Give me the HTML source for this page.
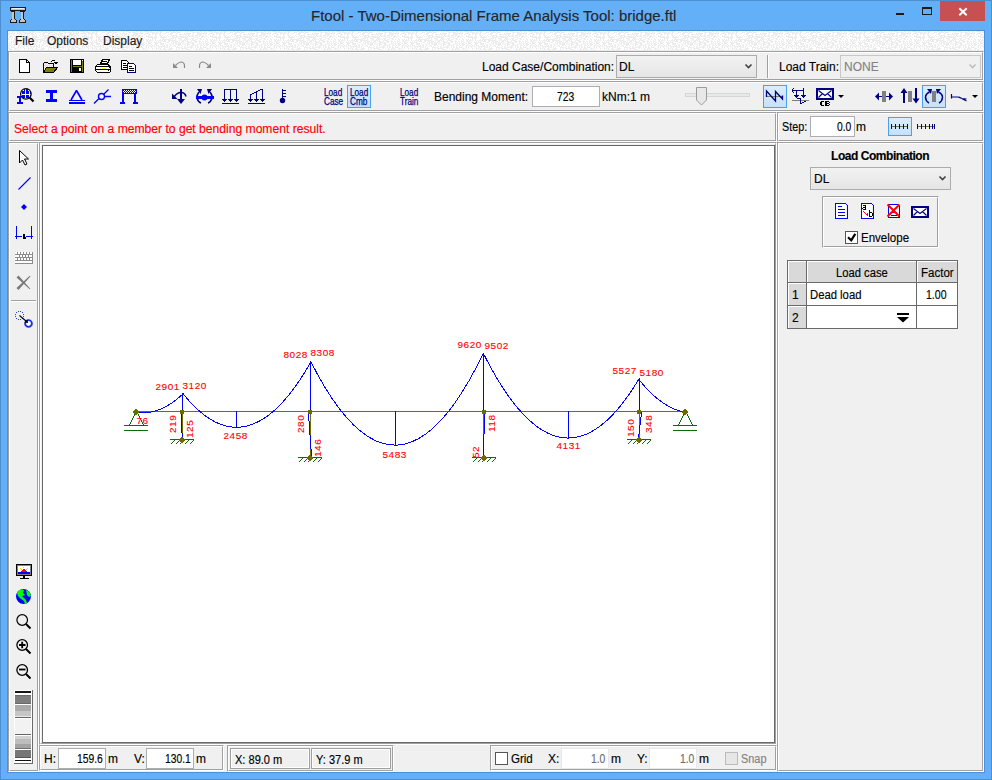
<!DOCTYPE html>
<html><head><meta charset="utf-8">
<style>
*{margin:0;padding:0;box-sizing:border-box}
html,body{width:992px;height:780px;overflow:hidden}
body{position:relative;background:#63b0f9;font-family:"Liberation Sans",sans-serif;font-size:12px;color:#000}
.a{position:absolute}
.t{position:absolute;white-space:nowrap;line-height:1;-webkit-text-stroke:0.15px currentColor}
.etch{position:absolute;border-top:1px solid #a0a0a0;border-left:1px solid #a0a0a0;border-right:1px solid #fff;border-bottom:1px solid #fff}
.etch>i{position:absolute;left:0;top:0;right:0;bottom:0;border-top:1px solid #fff;border-left:1px solid #fff;border-right:1px solid #a0a0a0;border-bottom:1px solid #a0a0a0}
.edit{position:absolute;background:#fff;border:1px solid #abadb3}
.combo{position:absolute;background:linear-gradient(#f2f2f2,#e5e5e5);border:1px solid #acacac}
.sel{position:absolute;background:linear-gradient(#dcedfc,#c5e1f9);border:1px solid #4a9ff0}
.small{position:absolute;white-space:nowrap;line-height:1;font-size:10.5px;color:#000080;transform-origin:0 0;transform:scaleX(0.78);-webkit-text-stroke:0.25px #000080}
svg.ov{position:absolute;left:0;top:0;width:992px;height:780px}
</style></head><body>
<!-- window frame edges -->
<div class="a" style="left:0;top:0;width:992px;height:1px;background:#4c8fd0"></div>
<div class="a" style="left:0;top:0;width:1px;height:780px;background:#4c8fd0"></div>
<div class="a" style="left:991px;top:0;width:1px;height:780px;background:#4c8fd0"></div>
<div class="a" style="left:0;top:779px;width:992px;height:1px;background:#4c8fd0"></div>

<!-- title -->
<div class="t" style="left:311px;top:8px;font-size:15px;color:#262626">Ftool - Two-Dimensional Frame Analysis Tool: bridge.ftl</div>

<!-- client -->
<div class="a" style="left:7px;top:30px;width:978px;height:743px;border:1px solid #4a91d8"></div>
<div class="a" style="left:8px;top:31px;width:976px;height:741px;background:#f0f0f0"></div>
<!-- menu bar -->
<div class="a" style="left:8px;top:31px;width:976px;height:20px;background:#f5f5f5"></div>
<svg class="a" style="left:8px;top:31px" width="976" height="20"><defs><pattern id="mt" width="64" height="19" patternUnits="userSpaceOnUse"><rect width="64" height="19" fill="#fff"/><path fill="#ececec" d="M0,0h2v1h-2zM3,0h1v1h-1zM5,0h2v1h-2zM8,0h5v1h-5zM14,0h2v1h-2zM19,0h1v1h-1zM21,0h1v1h-1zM23,0h4v1h-4zM28,0h1v1h-1zM31,0h1v1h-1zM33,0h3v1h-3zM37,0h2v1h-2zM40,0h2v1h-2zM44,0h1v1h-1zM49,0h1v1h-1zM51,0h2v1h-2zM54,0h3v1h-3zM61,0h1v1h-1zM1,1h1v1h-1zM4,1h1v1h-1zM6,1h1v1h-1zM11,1h2v1h-2zM14,1h5v1h-5zM20,1h3v1h-3zM24,1h2v1h-2zM30,1h3v1h-3zM35,1h5v1h-5zM41,1h4v1h-4zM51,1h1v1h-1zM56,1h3v1h-3zM60,1h4v1h-4zM0,2h7v1h-7zM9,2h5v1h-5zM16,2h6v1h-6zM23,2h2v1h-2zM27,2h1v1h-1zM29,2h1v1h-1zM34,2h3v1h-3zM40,2h2v1h-2zM48,2h1v1h-1zM50,2h5v1h-5zM57,2h1v1h-1zM61,2h3v1h-3zM0,3h2v1h-2zM5,3h1v1h-1zM8,3h1v1h-1zM13,3h2v1h-2zM16,3h1v1h-1zM19,3h2v1h-2zM23,3h3v1h-3zM28,3h1v1h-1zM32,3h1v1h-1zM34,3h2v1h-2zM40,3h1v1h-1zM43,3h4v1h-4zM48,3h3v1h-3zM52,3h2v1h-2zM56,3h1v1h-1zM61,3h3v1h-3zM0,4h1v1h-1zM2,4h2v1h-2zM6,4h1v1h-1zM10,4h1v1h-1zM12,4h2v1h-2zM19,4h1v1h-1zM24,4h1v1h-1zM26,4h1v1h-1zM31,4h1v1h-1zM35,4h6v1h-6zM44,4h1v1h-1zM47,4h1v1h-1zM50,4h1v1h-1zM52,4h2v1h-2zM56,4h2v1h-2zM59,4h3v1h-3zM63,4h1v1h-1zM1,5h3v1h-3zM6,5h1v1h-1zM10,5h3v1h-3zM14,5h3v1h-3zM19,5h2v1h-2zM24,5h2v1h-2zM27,5h2v1h-2zM32,5h1v1h-1zM34,5h1v1h-1zM36,5h2v1h-2zM40,5h2v1h-2zM43,5h7v1h-7zM51,5h1v1h-1zM53,5h5v1h-5zM60,5h2v1h-2zM63,5h1v1h-1zM1,6h2v1h-2zM4,6h1v1h-1zM8,6h1v1h-1zM12,6h5v1h-5zM18,6h3v1h-3zM24,6h7v1h-7zM34,6h1v1h-1zM36,6h5v1h-5zM42,6h1v1h-1zM44,6h8v1h-8zM58,6h2v1h-2zM61,6h1v1h-1zM0,7h1v1h-1zM6,7h1v1h-1zM16,7h5v1h-5zM26,7h2v1h-2zM33,7h1v1h-1zM35,7h3v1h-3zM39,7h1v1h-1zM42,7h3v1h-3zM49,7h3v1h-3zM53,7h1v1h-1zM55,7h3v1h-3zM61,7h1v1h-1zM63,7h1v1h-1zM0,8h2v1h-2zM3,8h1v1h-1zM6,8h2v1h-2zM10,8h3v1h-3zM14,8h1v1h-1zM16,8h1v1h-1zM19,8h1v1h-1zM24,8h1v1h-1zM26,8h9v1h-9zM36,8h1v1h-1zM39,8h1v1h-1zM43,8h3v1h-3zM48,8h5v1h-5zM54,8h1v1h-1zM56,8h2v1h-2zM59,8h2v1h-2zM5,9h1v1h-1zM7,9h1v1h-1zM10,9h2v1h-2zM13,9h4v1h-4zM19,9h1v1h-1zM21,9h1v1h-1zM23,9h4v1h-4zM28,9h2v1h-2zM32,9h8v1h-8zM43,9h2v1h-2zM46,9h4v1h-4zM51,9h1v1h-1zM55,9h5v1h-5zM63,9h1v1h-1zM0,10h1v1h-1zM3,10h1v1h-1zM5,10h2v1h-2zM11,10h3v1h-3zM20,10h1v1h-1zM22,10h1v1h-1zM24,10h1v1h-1zM27,10h3v1h-3zM32,10h2v1h-2zM36,10h2v1h-2zM39,10h3v1h-3zM45,10h3v1h-3zM50,10h3v1h-3zM54,10h2v1h-2zM58,10h4v1h-4zM63,10h1v1h-1zM3,11h1v1h-1zM5,11h1v1h-1zM7,11h2v1h-2zM10,11h1v1h-1zM12,11h4v1h-4zM18,11h3v1h-3zM22,11h4v1h-4zM31,11h2v1h-2zM35,11h1v1h-1zM37,11h7v1h-7zM45,11h1v1h-1zM47,11h2v1h-2zM51,11h4v1h-4zM56,11h2v1h-2zM59,11h2v1h-2zM63,11h1v1h-1zM0,12h2v1h-2zM3,12h1v1h-1zM6,12h2v1h-2zM10,12h1v1h-1zM12,12h3v1h-3zM19,12h3v1h-3zM24,12h4v1h-4zM29,12h1v1h-1zM35,12h3v1h-3zM39,12h2v1h-2zM42,12h3v1h-3zM46,12h1v1h-1zM50,12h4v1h-4zM55,12h3v1h-3zM63,12h1v1h-1zM1,13h1v1h-1zM3,13h1v1h-1zM5,13h4v1h-4zM11,13h2v1h-2zM15,13h1v1h-1zM19,13h2v1h-2zM24,13h4v1h-4zM31,13h1v1h-1zM33,13h2v1h-2zM37,13h1v1h-1zM40,13h5v1h-5zM47,13h3v1h-3zM51,13h3v1h-3zM56,13h3v1h-3zM61,13h2v1h-2zM0,14h3v1h-3zM4,14h1v1h-1zM6,14h2v1h-2zM10,14h2v1h-2zM13,14h2v1h-2zM16,14h1v1h-1zM18,14h1v1h-1zM20,14h3v1h-3zM26,14h1v1h-1zM28,14h1v1h-1zM30,14h2v1h-2zM34,14h2v1h-2zM38,14h2v1h-2zM42,14h2v1h-2zM45,14h1v1h-1zM49,14h1v1h-1zM51,14h2v1h-2zM55,14h3v1h-3zM59,14h3v1h-3zM0,15h1v1h-1zM3,15h1v1h-1zM5,15h1v1h-1zM9,15h2v1h-2zM12,15h1v1h-1zM14,15h3v1h-3zM18,15h2v1h-2zM22,15h8v1h-8zM31,15h1v1h-1zM33,15h1v1h-1zM37,15h1v1h-1zM39,15h1v1h-1zM41,15h1v1h-1zM46,15h1v1h-1zM48,15h1v1h-1zM51,15h1v1h-1zM54,15h2v1h-2zM57,15h1v1h-1zM59,15h1v1h-1zM61,15h1v1h-1zM0,16h2v1h-2zM3,16h4v1h-4zM10,16h1v1h-1zM12,16h1v1h-1zM15,16h1v1h-1zM20,16h1v1h-1zM23,16h1v1h-1zM25,16h1v1h-1zM28,16h1v1h-1zM30,16h2v1h-2zM33,16h1v1h-1zM35,16h1v1h-1zM40,16h4v1h-4zM45,16h1v1h-1zM48,16h2v1h-2zM51,16h6v1h-6zM59,16h1v1h-1zM61,16h2v1h-2zM0,17h3v1h-3zM6,17h3v1h-3zM11,17h1v1h-1zM13,17h1v1h-1zM16,17h1v1h-1zM18,17h1v1h-1zM20,17h3v1h-3zM24,17h1v1h-1zM27,17h2v1h-2zM33,17h4v1h-4zM40,17h1v1h-1zM43,17h1v1h-1zM45,17h6v1h-6zM55,17h1v1h-1zM57,17h1v1h-1zM60,17h1v1h-1zM63,17h1v1h-1zM1,18h3v1h-3zM7,18h1v1h-1zM9,18h2v1h-2zM16,18h1v1h-1zM20,18h1v1h-1zM23,18h2v1h-2zM26,18h1v1h-1zM28,18h3v1h-3zM32,18h4v1h-4zM40,18h1v1h-1zM42,18h1v1h-1zM46,18h1v1h-1zM50,18h4v1h-4zM59,18h3v1h-3zM63,18h1v1h-1z"/></pattern></defs><rect width="976" height="19" fill="url(#mt)"/><rect y="19" width="976" height="1" fill="#ececec"/></svg>
<div class="t" style="left:15px;top:35px;color:#1a1a1a">File</div>
<div class="t" style="left:47px;top:35px;color:#1a1a1a">Options</div>
<div class="t" style="left:103px;top:35px;color:#1a1a1a">Display</div>

<!-- bands / panels -->
<div class="etch" style="left:8px;top:51px;width:976px;height:30px"><i></i></div>
<div class="etch" style="left:8px;top:81px;width:976px;height:31px"><i></i></div>
<div class="etch" style="left:8px;top:112px;width:769px;height:30px"><i></i></div>
<div class="etch" style="left:777px;top:112px;width:207px;height:30px"><i></i></div>
<div class="etch" style="left:8px;top:142px;width:31px;height:630px"><i></i></div>
<div class="etch" style="left:39px;top:142px;width:738px;height:603px"><i></i></div>
<div class="etch" style="left:777px;top:142px;width:207px;height:630px"><i></i></div>
<div class="etch" style="left:39px;top:745px;width:185px;height:26px"><i></i></div>
<div class="etch" style="left:227px;top:745px;width:167px;height:27px"><i></i></div>
<div class="etch" style="left:490px;top:745px;width:287px;height:26px"><i></i></div>

<!-- canvas -->
<div class="a" style="left:42px;top:145px;width:733px;height:598px;background:#fff;border:1px solid #696969"></div>

<!-- band 1 controls -->
<div class="t" style="left:482px;top:61px">Load Case/Combination:</div>
<div class="combo" style="left:616px;top:55px;width:141px;height:23px"></div>
<div class="t" style="left:619px;top:61px">DL</div>
<div class="a" style="left:767px;top:55px;width:1px;height:23px;background:#a0a0a0"></div>
<div class="a" style="left:768px;top:55px;width:1px;height:23px;background:#fff"></div>
<div class="t" style="left:779px;top:61px">Load Train:</div>
<div class="a" style="left:840px;top:55px;width:141px;height:23px;background:#f0f0f0;border:1px solid #c8c8c8"></div>
<div class="t" style="left:844px;top:61px;color:#838383">NONE</div>

<!-- band 2 controls -->
<div class="small" style="left:324px;top:87px">Load</div>
<div class="small" style="left:324px;top:96px">Case</div>
<div class="sel" style="left:347px;top:85px;width:24px;height:23px"></div>
<div class="small" style="left:350px;top:87px">Load</div>
<div class="small" style="left:350px;top:96px">Cmb</div>
<div class="small" style="left:400px;top:87px">Load</div>
<div class="small" style="left:400px;top:96px">Train</div>
<div class="t" style="left:434px;top:91px">Bending Moment:</div>
<div class="edit" style="left:532px;top:86px;width:68px;height:21px;border-color:#abadb3"></div>
<div class="t" style="left:557px;top:91px;transform:scaleX(.86);transform-origin:0 0">723</div>
<div class="t" style="left:602px;top:91px">kNm:1 m</div>
<div class="sel" style="left:763px;top:85px;width:24px;height:23px"></div>
<div class="sel" style="left:922px;top:85px;width:24px;height:23px"></div>

<!-- message -->
<div class="t" style="left:14px;top:123px;color:#ff0000;transform:scaleX(1.009);transform-origin:0 0">Select a point on a member to get bending moment result.</div>

<!-- step panel -->
<div class="t" style="left:782px;top:121px;transform:scaleX(.9);transform-origin:0 0">Step:</div>
<div class="edit" style="left:810px;top:116px;width:45px;height:21px;border-color:#abadb3"></div>
<div class="t" style="left:837px;top:121px;transform:scaleX(.86);transform-origin:0 0">0.0</div>
<div class="t" style="left:856px;top:121px">m</div>
<div class="sel" style="left:888px;top:117px;width:24px;height:19px"></div>

<!-- right panel -->
<div class="t" style="left:831px;top:150px;font-weight:bold;letter-spacing:-0.45px">Load Combination</div>
<div class="combo" style="left:810px;top:167px;width:141px;height:23px"></div>
<div class="t" style="left:814px;top:173px">DL</div>
<div class="etch" style="left:822px;top:196px;width:117px;height:52px"><i></i></div>
<div class="a" style="left:845px;top:231px;width:13px;height:13px;background:#fff;border:1px solid #555"></div>
<div class="t" style="left:861px;top:232px;transform:scaleX(.96);transform-origin:0 0">Envelope</div>

<!-- table -->
<div class="a" style="left:787px;top:260px;width:171px;height:69px;background:#696969"></div>
<div class="a" style="left:788px;top:261px;width:18px;height:21px;background:#d9d9d9;border-top:1px solid #fff;border-left:1px solid #fff"></div>
<div class="a" style="left:807px;top:261px;width:109px;height:21px;background:#d9d9d9;border-top:1px solid #fff;border-left:1px solid #fff"></div>
<div class="a" style="left:917px;top:261px;width:40px;height:21px;background:#d9d9d9;border-top:1px solid #fff;border-left:1px solid #fff"></div>
<div class="a" style="left:788px;top:283px;width:18px;height:22px;background:#d9d9d9;border-top:1px solid #fff;border-left:1px solid #fff"></div>
<div class="a" style="left:807px;top:283px;width:109px;height:22px;background:#fff"></div>
<div class="a" style="left:917px;top:283px;width:40px;height:22px;background:#fff"></div>
<div class="a" style="left:788px;top:306px;width:18px;height:22px;background:#d9d9d9;border-top:1px solid #fff;border-left:1px solid #fff"></div>
<div class="a" style="left:807px;top:306px;width:109px;height:22px;background:#fff"></div>
<div class="a" style="left:917px;top:306px;width:40px;height:22px;background:#fff"></div>
<div class="t" style="left:836px;top:267px;transform:scaleX(.935);transform-origin:0 0">Load case</div>
<div class="t" style="left:921px;top:267px;transform:scaleX(.96);transform-origin:0 0">Factor</div>
<div class="t" style="left:792px;top:289px">1</div>
<div class="t" style="left:810px;top:289px;transform:scaleX(.94);transform-origin:0 0">Dead load</div>
<div class="t" style="left:926px;top:289px;transform:scaleX(.88);transform-origin:0 0">1.00</div>
<div class="t" style="left:792px;top:312px">2</div>

<!-- status bar -->
<div class="t" style="left:44px;top:753px">H:</div>
<div class="edit" style="left:58px;top:748px;width:48px;height:21px;border-color:#abadb3"></div>
<div class="t" style="left:77px;top:753px;transform:scaleX(.86);transform-origin:0 0">159.6</div>
<div class="t" style="left:108px;top:753px">m</div>
<div class="t" style="left:134px;top:753px">V:</div>
<div class="edit" style="left:146px;top:748px;width:48px;height:21px;border-color:#abadb3"></div>
<div class="t" style="left:165px;top:753px;transform:scaleX(.86);transform-origin:0 0">130.1</div>
<div class="t" style="left:196px;top:753px">m</div>
<div class="a" style="left:230px;top:748px;width:80px;height:21px;border:1px solid #a0a0a0"><i class="a" style="left:0;top:0;right:0;bottom:0;border:1px solid #fff"></i></div>
<div class="a" style="left:311px;top:748px;width:80px;height:21px;border:1px solid #a0a0a0"><i class="a" style="left:0;top:0;right:0;bottom:0;border:1px solid #fff"></i></div>
<div class="t" style="left:235px;top:754px;transform:scaleX(.92);transform-origin:0 0">X: 89.0 m</div>
<div class="t" style="left:316px;top:754px;transform:scaleX(.92);transform-origin:0 0">Y: 37.9 m</div>
<div class="a" style="left:495px;top:752px;width:13px;height:13px;background:#fff;border:1px solid #555"></div>
<div class="t" style="left:511px;top:753px;transform:scaleX(.96);transform-origin:0 0">Grid</div>
<div class="t" style="left:548px;top:753px">X:</div>
<div class="a" style="left:561px;top:748px;width:48px;height:21px;background:#fff;border:1px solid #e8e8e8"></div>
<div class="t" style="left:591px;top:753px;color:#6d6d6d;transform:scaleX(.86);transform-origin:0 0">1.0</div>
<div class="t" style="left:611px;top:753px">m</div>
<div class="t" style="left:637px;top:753px">Y:</div>
<div class="a" style="left:649px;top:748px;width:48px;height:21px;background:#fff;border:1px solid #e8e8e8"></div>
<div class="t" style="left:680px;top:753px;color:#6d6d6d;transform:scaleX(.86);transform-origin:0 0">1.0</div>
<div class="t" style="left:699px;top:753px">m</div>
<div class="a" style="left:725px;top:752px;width:13px;height:13px;background:#e6e6e6;border:1px solid #bcbcbc"></div>
<div class="t" style="left:741px;top:753px;color:#838383;transform:scaleX(.91);transform-origin:0 0">Snap</div>

<svg class="ov" viewBox="0 0 992 780" font-family="Liberation Sans">
<!-- title icon -->
<g shape-rendering="crispEdges">
<path fill="#1e1a16" d="M10,7h16v4h-16z M11,11h4v1h-4z M20,11h5v1h-5z M12,12h3v7h-3z M21,12h3v7h-3z M11,19h5v1h-5z M20,19h5v1h-5z M10,20h7v3h-7z M19,20h7v3h-7z"/>
<path fill="#c8c4c0" d="M11,8h14v2h-14z M12,12h2v7h-2z M21,12h2v7h-2z M12,19h3v1h-3z M21,19h3v1h-3z M11,20h5v2h-5z M20,20h5v2h-5z"/>
<path fill="#f0ece8" d="M12,8h12v1h-12z"/>
</g>
<!-- min/max/close -->
<rect x="896" y="13" width="8" height="2" fill="#1d1a17"/>
<rect x="922" y="7" width="10" height="8" fill="#1d1a17"/><rect x="923" y="9" width="8" height="5" fill="#63b0f9"/>
<rect x="940" y="1" width="45" height="20" fill="#c75050"/>
</g>
<path d="M959.3,8.3 L966.7,15.2 M966.7,8.3 L959.3,15.2" stroke="#fff" stroke-width="2"/>

<!-- band1 icons -->
<g shape-rendering="crispEdges">
<path d="M19.5,59.5 H26.5 L29.5,62.5 V72.5 H19.5 Z" fill="#fff" stroke="#000"/>
<path d="M26.5,59.5 V62.5 H29.5" fill="none" stroke="#000"/>
<!-- open -->
<defs><pattern id="chk" width="2" height="2" patternUnits="userSpaceOnUse"><rect width="2" height="2" fill="#ffff00"/><rect width="1" height="1" fill="#fff"/><rect x="1" y="1" width="1" height="1" fill="#fff"/></pattern></defs>
<path d="M43.5,72.5 V63.5 L44.5,62.5 H47.5 L48.5,63.5 H53.5 V67.5" fill="url(#chk)" stroke="#000"/>
<path d="M43.5,72.5 L46.5,67.5 H57.5 L53.5,72.5 Z" fill="#808000" stroke="#000"/>
<path d="M50.5,62.5 L52.5,60.5 H54.5 L55.5,61.5" fill="none" stroke="#000"/>
<path d="M54,62h4v1h-1v1h-2v-1h-1z" fill="#000"/>
<!-- save -->
<rect x="70" y="59" width="14" height="14" fill="#000"/>
<rect x="71" y="60" width="1" height="12" fill="#808000"/><rect x="82" y="61" width="1" height="11" fill="#808000"/>
<rect x="73" y="60" width="8" height="5" fill="#fff"/>
<rect x="73" y="66" width="9" height="1" fill="#808000"/>
<rect x="79" y="68" width="2" height="3" fill="#fff"/>
<rect x="82" y="60" width="1" height="1" fill="#fff"/>
<!-- printer -->
<path d="M100.5,63.5 L102.5,59.5 H109.5 L107.5,63.5 Z" fill="#fff" stroke="#000"/>
<rect x="102" y="61" width="5" height="1" fill="#000"/><rect x="101" y="62" width="1" height="1" fill="#000"/>
<path d="M97.5,64.5 H108.5 L110.5,66.5 V71.5 L109.5,72.5 H97.5 L95.5,70.5 V66.5 Z" fill="#fff" stroke="#000"/>
<rect x="96" y="66" width="14" height="1" fill="#000"/>
<rect x="96" y="69" width="14" height="1" fill="#000"/>
<rect x="102" y="68" width="4" height="1" fill="#ffff00"/>
<rect x="108" y="65" width="1" height="1" fill="#000"/><rect x="109" y="67" width="1" height="1" fill="#000"/><rect x="108" y="70" width="1" height="1" fill="#000"/>
<!-- copy -->
<path d="M121.5,60.5 H126.5 L128.5,62.5 V69.5 H121.5 Z" fill="#fff" stroke="#000"/>
<rect x="123" y="63" width="3" height="1" fill="#000"/><rect x="123" y="65" width="4" height="1" fill="#000"/><rect x="123" y="67" width="4" height="1" fill="#000"/>
<path d="M127.5,63.5 H133.5 L135.5,65.5 V72.5 H127.5 Z" fill="#fff" stroke="#000080"/>
<rect x="129" y="66" width="3" height="1" fill="#000"/><rect x="129" y="68" width="5" height="1" fill="#000"/><rect x="129" y="70" width="5" height="1" fill="#000"/>
</g>
<!-- undo/redo -->
<path d="M173,63 L178,68 L173,68 Z" fill="#8a8a8a"/>
<path d="M175.5,65.5 Q179,62 181.5,62 Q184.5,62.5 184.5,66 V68" fill="none" stroke="#8a8a8a" stroke-width="1.2"/>
<path d="M211,63 L206,68 L211,68 Z" fill="#8a8a8a"/>
<path d="M208.5,65.5 Q205,62 202.5,62 Q199.5,62.5 199.5,66 V68" fill="none" stroke="#8a8a8a" stroke-width="1.2"/>

<!-- band2 icons -->
<g shape-rendering="crispEdges">
<path fill="#0000ff" d="M17,96h4v2h-4z M19,98h2v4h-2z M17,102h6v2h-6z"/>
<circle cx="25.9" cy="93.9" r="5.3" fill="#fff"/>
<path fill="#0000ff" d="M22,91h3v3h-3z M26,91h3v3h-3z M22,95h3v3h-3z M26,95h3v3h-3z M24,89h1v2h-1z M26,89h2v2h-2z M30,91h1v3h-1z M30,95h1v2h-1z"/>
</g>
<circle cx="25.9" cy="93.9" r="5.3" fill="none" stroke="#000" stroke-width="1.2"/>
<path d="M29.8,97.8 L33.5,101.5" stroke="#000" stroke-width="2.2"/>
<g shape-rendering="crispEdges">
<rect x="46" y="90" width="11" height="3" fill="#0000ff"/><rect x="50" y="93" width="3" height="6" fill="#0000ff"/><rect x="46" y="99" width="11" height="3" fill="#0000ff"/>
<rect x="69" y="100" width="16" height="1" fill="#0000ff"/><rect x="69" y="102" width="16" height="2" fill="#0000ff"/>
</g>
<path d="M76.5,90.5 L71,100 M76.5,90.5 L82,100" stroke="#0000ff" stroke-width="1.6"/>
<path d="M94,103.5 L99,98.5 M104,94 L108.5,89.5 M104.5,96.5 H111" stroke="#0000ff" stroke-width="1.3"/>
<circle cx="101.5" cy="96.5" r="3" fill="#fff" stroke="#0000ff" stroke-width="1.4"/>
<g shape-rendering="crispEdges">
<rect x="122" y="89" width="15" height="5" fill="#0000ff"/>
<path d="M124,90h1v1h-1zM126,90h1v1h-1zM128,90h1v1h-1zM130,90h1v1h-1zM132,90h1v1h-1zM134,90h1v1h-1zM123,91h1v1h-1zM125,91h1v1h-1zM127,91h1v1h-1zM129,91h1v1h-1zM131,91h1v1h-1zM133,91h1v1h-1zM135,91h1v1h-1zM124,92h1v1h-1zM126,92h1v1h-1zM128,92h1v1h-1zM130,92h1v1h-1zM132,92h1v1h-1zM134,92h1v1h-1z" fill="#fff"/>
<rect x="122" y="94" width="2" height="8" fill="#0000ff"/><rect x="134" y="94" width="2" height="8" fill="#0000ff"/>
<rect x="120" y="102" width="5" height="2" fill="#0000ff"/><rect x="133" y="102" width="5" height="2" fill="#0000ff"/>
</g>
<!-- support displacement icon -->
<g fill="#000080" stroke="none">
<rect x="180" y="89" width="2" height="11" shape-rendering="crispEdges"/>
<path d="M177,99 H185 L181,104 Z"/>
<path d="M172,93.5 L172,99 L177.5,99 Z"/>
</g>
<path d="M174,97 Q177,92.5 181,92.5 Q185,92.5 186,96.5" fill="none" stroke="#000080" stroke-width="1.5"/>
<!-- moment icon -->
<path d="M199,92 Q196.5,95 197,98 Q198,102 201,103 M210,92 Q212.5,95 212,98 Q211,102 208,103" fill="none" stroke="#000080" stroke-width="1.6"/>
<path d="M197,89 H202 L200.5,94 Z M212,89 H207 L208.5,94 Z" fill="#000080"/>
<rect x="196" y="96" width="18" height="3" fill="#0000ff" shape-rendering="crispEdges"/>
<circle cx="204.5" cy="97.5" r="3" fill="#0000ff"/>
<!-- uniform load -->
<g shape-rendering="crispEdges"><path fill="#000080" d="M224,89h13v1h-13z M224,90h1v9h-1z M230,90h1v9h-1z M236,90h1v9h-1z M222,103h17v1h-17z M222,99h5v1h-1v1h-1v1h-1v-1h-1v-1h-1z M228,99h5v1h-1v1h-1v1h-1v-1h-1v-1h-1z M234,99h5v1h-1v1h-1v1h-1v-1h-1v-1h-1z"/>
<path fill="#000080" d="M250,95h1v4h-1z M256,92h1v7h-1z M262,89h1v10h-1z M248,103h17v1h-17z M250,94h2v1h-2z M252,93h2v1h-2z M254,92h2v1h-2z M256,91h2v1h-2z M258,90h2v1h-2z M260,89h2v1h-2z M248,99h5v1h-1v1h-1v1h-1v-1h-1v-1h-1z M254,99h5v1h-1v1h-1v1h-1v-1h-1v-1h-1z M260,99h5v1h-1v1h-1v1h-1v-1h-1v-1h-1z"/></g>
<!-- thermometer -->
<path fill="#000080" d="M282,89h1v10h-1z M283,90h3v1h-3z M283,93h3v1h-3z M283,96h3v1h-3z"/><circle cx="282.5" cy="100.5" r="2.7" fill="#000080"/>

<!-- slider -->
<rect x="685.5" y="93.5" width="64" height="3" fill="#e7eaea" stroke="#d6d6d6" shape-rendering="crispEdges"/>
<path d="M696.5,87.5 H706.5 V100 L701.5,105 L696.5,100 Z" fill="#e8e8e8" stroke="#9b9b9b"/>
<!-- zigzag -->
<rect x="766" y="96" width="17" height="1" fill="#808060" shape-rendering="crispEdges"/>
<path d="M766.5,97 V91 L775.5,101 V91.5 L782.5,99 V95.5" fill="none" stroke="#000080" stroke-width="1.3"/>
<!-- icon2 -->
<g shape-rendering="crispEdges">
<rect x="792" y="100" width="17" height="1" fill="#808080"/>
<path fill="#000080" d="M792,90h12v1h-12z M793,88h1v1h-1z M792,89h1v1h-1z M792,91h1v1h-1z M793,92h1v1h-1z M796,91h1v4h-1z M803,88h1v7h-1z M794,95h5v1h-5z M795,96h3v1h-3z M796,97h1v1h-1z M801,95h5v1h-5z M802,96h3v1h-3z M803,97h1v1h-1z M797,98h3v1h-3z M800,98h1v6h-1z M801,103h1v1h-1z M802,102h2v1h-2z M804,101h2v1h-2z"/>
</g>
<!-- envelope CB -->
<g shape-rendering="crispEdges">
<rect x="816" y="88" width="18" height="12" fill="#000080"/><rect x="818" y="90" width="14" height="8" fill="#fff"/>
<path fill="#000" d="M821,101h3v1h-3z M820,102h2v3h-2z M821,105h3v1h-3z M825,101h2v5h-2z M827,101h2v1h-2z M827,103h2v1h-2z M827,105h2v1h-2z M829,102h1v1h-1z M829,104h1v1h-1z"/>
</g>
<path d="M818.5,90.5 L825,95.5 L831.5,90.5 M818.5,97.5 L822.5,93.5 M831.5,97.5 L827.5,93.5" fill="none" stroke="#000080" stroke-width="1.1"/>
<path d="M838,95 H844 L841,98 Z" fill="#000"/>
<!-- <-|-> -->
<rect x="882" y="91" width="4" height="11" fill="#808080" shape-rendering="crispEdges"/>
<path d="M875,96.5 L879,92.5 V100.5 Z M893,96.5 L889,92.5 V100.5 Z" fill="#000080"/>
<rect x="878" y="96" width="4" height="1" fill="#000080"/><rect x="886" y="96" width="4" height="1" fill="#000080"/>
<!-- up/down -->
<rect x="908" y="91" width="4" height="11" fill="#808080" shape-rendering="crispEdges"/>
<rect x="903" y="91" width="2" height="12" fill="#000080" shape-rendering="crispEdges"/><rect x="915" y="88" width="2" height="12" fill="#000080" shape-rendering="crispEdges"/>
<path d="M904,88 L900.5,93 H907.5 Z M916,103.5 L912.5,98.5 H919.5 Z" fill="#000080"/>
<!-- rotate -->
<rect x="932" y="91" width="4" height="11" fill="#808080" shape-rendering="crispEdges"/>
<path d="M929.5,92 Q925.5,94 925.5,97.5 Q926,101.5 929,103 M938.5,92 Q942.5,94 942.5,97.5 Q942,101.5 939,103" fill="none" stroke="#000080" stroke-width="1.5"/>
<path d="M927,89 H932 L931,94 Z M941,89 H936 L937,94 Z" fill="#000080"/>
<!-- line icon -->
<path d="M951.5,94 V98.5 M951.5,97 H958 L962,98.5 L966.5,99 M959,97 L966.5,101" fill="none" stroke="#000080" stroke-width="1.2"/>
<path d="M972,95 H978 L975,98 Z" fill="#000"/>

<!-- step icons -->
<g fill="#000080" shape-rendering="crispEdges">
<rect x="891" y="126" width="17" height="1" fill="#707060"/>
<rect x="891" y="124" width="1" height="5"/><rect x="895" y="124" width="1" height="5"/><rect x="899" y="124" width="1" height="5"/><rect x="903" y="124" width="1" height="5"/><rect x="907" y="124" width="1" height="5"/>
<rect x="917" y="126" width="18" height="1" fill="#707060"/>
<rect x="917" y="124" width="1" height="5"/><rect x="921" y="124" width="1" height="5"/><rect x="925" y="124" width="1" height="5"/><rect x="929" y="124" width="1" height="5"/><rect x="932" y="124" width="1" height="5"/><rect x="934" y="124" width="1" height="5"/>
</g>

<!-- combo chevrons -->
<path d="M745.5,64.5 L748.5,67.5 L751.5,64.5" fill="none" stroke="#404040" stroke-width="1.6"/>
<path d="M969.5,64.5 L972.5,67.5 L975.5,64.5" fill="none" stroke="#bdbdbd" stroke-width="1.6"/>
<path d="M939.5,176.5 L942.5,179.5 L945.5,176.5" fill="none" stroke="#404040" stroke-width="1.6"/>

<!-- right panel icons -->
<g shape-rendering="crispEdges">
<path fill="#fff" d="M836,204h10v14h-10z"/>
<path fill="#0000ff" d="M835,203h10v1h-10z M835,204h1v15h-1z M835,218h13v1h-13z M847,205h1v13h-1z M845,203h1v1h-1z M846,204h1v1h-1z M838,206h4v1h-4z M838,209h7v1h-7z M838,212h7v1h-7z M838,215h7v1h-7z"/>
<path fill="#fff" d="M862,204h10v14h-10z"/>
<path fill="#0000ff" d="M861,203h10v1h-10z M861,204h1v15h-1z M861,218h13v1h-13z M873,205h1v13h-1z M871,203h1v1h-1z M872,204h1v1h-1z"/>
<path fill="#000" d="M863,205h3v1h-3z M865,206h1v3h-1z M863,207h2v1h-2z M862,208h1v1h-1z M863,209h3v1h-3z M869,210h1v7h-1z M870,212h2v1h-2z M872,213h1v3h-1z M870,216h2v1h-2z"/>
<path fill="#ff0000" d="M863,211h1v1h-1z M864,212h1v1h-1z M865,213h1v1h-1z M866,214h2v1h-2z M867,213h1v1h-1z M867,215h1v1h-1z"/>
<path fill="#fff" d="M889,205h10v12h-10z"/>
<path fill="#0000ff" d="M888,204h10v1h-10z M888,205h1v13h-1z M888,217h12v1h-12z M899,206h1v11h-1z M891,212h6v1h-6z M891,215h6v1h-6z"/>
</g>
<path d="M887.5,204.5 L899.5,216.5 M899.5,204.5 L887.5,216.5" stroke="#ff0000" stroke-width="2"/>
<path d="M848,237.3 L851.2,240.3 L855.3,233.8" fill="none" stroke="#000" stroke-width="2.2"/>
<!-- table dropdown glyph -->
<rect x="897" y="313" width="12" height="2" fill="#000" shape-rendering="crispEdges"/>
<path d="M897,317 H909 L903,322.5 Z" fill="#000"/>
<g shape-rendering="crispEdges"><rect x="911" y="206" width="18" height="12" fill="#000080"/><rect x="913" y="208" width="14" height="8" fill="#fff"/></g>
<path d="M913.5,208.5 L920,213.5 L926.5,208.5 M913.5,215.5 L917.5,211.5 M926.5,215.5 L922.5,211.5" fill="none" stroke="#000080" stroke-width="1.1"/>
<!-- left toolbar icons -->
<path d="M19.5,150.5 V163 L22.5,160 L25,165 L27,164 L24.5,159 H28.5 Z" fill="#fff" stroke="#000" stroke-width="1"/>
<path d="M18.5,189.5 L30.5,177.5" stroke="#0000ff" stroke-width="1.1"/>
<path d="M24,204 L27,207 L24,210 L21,207 Z" fill="#0000ff"/>
<g shape-rendering="crispEdges">
<path fill="#0000ff" d="M16,226h1v13h-1z M31,226h1v13h-1z M15,236h7v1h-7z M26,236h7v1h-7z"/>
<path fill="#000" d="M23,234h2v5h-2z M25,237h1v2h-1z"/>
</g>
<g shape-rendering="crispEdges">
<rect x="15" y="252" width="18" height="12" fill="#8c8c8c"/>
<path fill="#fff" d="M15,252h2v2h-2z M18,252h2v2h-2z M21,252h2v2h-2z M24,252h2v2h-2z M27,252h2v2h-2z M30,252h2v2h-2z M15,255h4v2h-4z M20,255h2v2h-2z M23,255h2v2h-2z M26,255h2v2h-2z M29,255h3v2h-3z M15,258h2v2h-2z M18,258h2v2h-2z M21,258h2v2h-2z M24,258h2v2h-2z M27,258h2v2h-2z M30,258h2v2h-2z M15,261h17v2h-17z"/>
</g>
<path d="M16.5,288 L18.5,290 L30.5,276.3 L29.7,275.7 Z" fill="#7a7a7a"/>
<path d="M16.5,277.5 L18.5,275.5 L30.3,288.7 L29.7,289.3 Z" fill="#7a7a7a"/>
<rect x="11" y="300" width="25" height="1" fill="#a0a0a0" shape-rendering="crispEdges"/><rect x="11" y="301" width="25" height="1" fill="#fff" shape-rendering="crispEdges"/>
<path d="M18,311h1v1h-1zM20,311h1v1h-1zM16,312h1v1h-1zM22,312h1v1h-1zM15,314h1v1h-1zM23,314h1v1h-1zM15,316h1v1h-1zM23,316h1v1h-1zM16,318h1v1h-1zM22,318h1v1h-1zM18,319h1v1h-1zM20,319h1v1h-1z" fill="#2f3fe0" shape-rendering="crispEdges"/>
<circle cx="28.5" cy="323.5" r="3.4" fill="#fff" stroke="#2233d8" stroke-width="1.9"/>
<path d="M19.5,315.5 L26.5,321.5" stroke="#000" stroke-width="1.1"/>
<path d="M28,323 L24.5,322.5 L27.5,319.5 Z" fill="#000"/>
<!-- monitor -->
<g shape-rendering="crispEdges">
<rect x="16" y="564" width="16" height="12" fill="#000"/>
<rect x="17" y="565" width="14" height="10" fill="#808080"/>
<rect x="18" y="566" width="12" height="8" fill="#fff"/>
<rect x="18" y="572" width="12" height="2" fill="#0000ff"/>
<path fill="#ff0000" d="M22,570h4v2h-4z M21,571h6v1h-6z M23,569h2v1h-2z"/>
<path fill="#ffd800" d="M23,567h1v1h-1z M20,568h1v1h-1z M21,569h1v1h-1z M27,568h1v1h-1z M26,569h1v1h-1z"/>
<rect x="23" y="576" width="2" height="2" fill="#000"/><rect x="20" y="578" width="9" height="1" fill="#000"/>
</g>
<!-- globe -->
<circle cx="23.5" cy="596.5" r="7.5" fill="#0000ff"/>
<path d="M19,590 Q22,589 24,590 L23,593 L25,595 L22,596 L24,598 L26,600 L27,603 L25,604 L24,601 L21,599 L18,596 L17,593 Z M26,590 Q29,591 30,593 L31,596 L29,597 L27,595 Z" fill="#00ff00"/>
<!-- zooms -->
<circle cx="22.2" cy="620" r="5.3" fill="none" stroke="#000" stroke-width="1.2"/>
<path d="M26,624 L30.5,628.5" stroke="#000" stroke-width="2"/>
<circle cx="22.2" cy="645" r="5.3" fill="none" stroke="#000" stroke-width="1.3"/>
<path d="M26,649 L30.5,653.5" stroke="#000" stroke-width="2"/>
<path d="M19,645 H25.5 M22.2,641.8 V648.2" stroke="#000" stroke-width="1.8"/>
<circle cx="22.2" cy="670" r="5.3" fill="none" stroke="#000" stroke-width="1.3"/>
<path d="M26,674 L30.5,678.5" stroke="#000" stroke-width="2"/>
<path d="M19,669.5 H25.5" stroke="#000" stroke-width="1.8"/>
<!-- gradient bar -->
<g shape-rendering="crispEdges">
<rect x="14" y="690" width="19" height="74" fill="#6a6a6a"/>
<rect x="14" y="690" width="18" height="73" fill="#fff"/>
<rect x="15" y="691" width="16" height="2" fill="#151515"/>
<rect x="15" y="693" width="16" height="1" fill="#fff"/>
<rect x="15" y="694" width="16" height="1" fill="#fff"/>
<rect x="15" y="695" width="16" height="1" fill="#6c6c6c"/>
<rect x="15" y="696" width="16" height="7" fill="#7e7e7e"/>
<rect x="15" y="703" width="16" height="1" fill="#696969"/>
<rect x="15" y="704" width="16" height="1" fill="#fff"/>
<rect x="15" y="705" width="16" height="6" fill="#ababab"/>
<rect x="15" y="711" width="16" height="5" fill="#c6c6c6"/>
<rect x="15" y="716" width="16" height="1" fill="#e8e8e8"/>
<rect x="15" y="717" width="16" height="1" fill="#666"/>
<rect x="15" y="718" width="16" height="1" fill="#fff"/>
<rect x="15" y="719" width="16" height="15" fill="#f2f2f2"/>
<rect x="15" y="734" width="16" height="1" fill="#666"/>
<rect x="15" y="735" width="16" height="1" fill="#fff"/>
<rect x="15" y="736" width="16" height="3" fill="#d2d2d2"/>
<rect x="15" y="739" width="16" height="5" fill="#bdbdbd"/>
<rect x="15" y="744" width="16" height="4" fill="#a3a3a3"/>
<rect x="15" y="748" width="16" height="1" fill="#707070"/>
<rect x="15" y="749" width="16" height="1" fill="#fff"/>
<rect x="15" y="750" width="16" height="7" fill="#767676"/>
<rect x="15" y="757" width="16" height="1" fill="#555"/>
<rect x="15" y="758" width="16" height="2" fill="#fff"/>
<rect x="15" y="760" width="16" height="1" fill="#111"/>
<rect x="15" y="761" width="16" height="1" fill="#fff"/>
</g>
<!-- drawing -->
<rect x="136" y="411" width="550" height="1" fill="#737000"/><rect x="182" y="411" width="1" height="28" fill="#737000"/><rect x="310" y="411" width="1" height="46" fill="#737000"/><rect x="483" y="411" width="1" height="46" fill="#737000"/><rect x="639" y="411" width="1" height="28" fill="#737000"/><polyline fill="none" stroke="#0000ff" stroke-width="1" shape-rendering="crispEdges" points="136.50,412.20 138.42,412.45 140.33,412.61 142.25,412.69 144.17,412.68 146.08,412.59 148.00,412.41 149.92,412.14 151.83,411.78 153.75,411.34 155.67,410.81 157.58,410.20 159.50,409.50 161.42,408.71 163.33,407.83 165.25,406.87 167.17,405.82 169.08,404.69 171.00,403.47 172.92,402.16 174.83,400.77 176.75,399.29 178.67,397.72 180.58,396.07 182.50,394.33"/><polyline fill="none" stroke="#0000ff" stroke-width="1" shape-rendering="crispEdges" points="182.50,392.98 187.83,399.43 193.17,405.20 198.50,410.31 203.83,414.74 209.17,418.51 214.50,421.60 219.83,424.03 225.17,425.79 230.50,426.87 235.83,427.29 241.17,427.03 246.50,426.11 251.83,424.51 257.17,422.25 262.50,419.31 267.83,415.71 273.17,411.43 278.50,406.49 283.83,400.87 289.17,394.59 294.50,387.63 299.83,380.01 305.17,371.71 310.50,362.75"/><polyline fill="none" stroke="#0000ff" stroke-width="1" shape-rendering="crispEdges" points="310.50,361.02 317.71,374.76 324.92,387.28 332.12,398.57 339.33,408.63 346.54,417.48 353.75,425.10 360.96,431.49 368.17,436.66 375.38,440.61 382.58,443.33 389.79,444.83 397.00,445.11 404.21,444.16 411.42,441.99 418.62,438.59 425.83,433.97 433.04,428.12 440.25,421.06 447.46,412.76 454.67,403.25 461.88,392.51 469.08,380.54 476.29,367.35 483.50,352.94"/><polyline fill="none" stroke="#0000ff" stroke-width="1" shape-rendering="crispEdges" points="483.50,353.67 490.00,366.13 496.50,377.60 503.00,388.08 509.50,397.56 516.00,406.04 522.50,413.53 529.00,420.03 535.50,425.52 542.00,430.03 548.50,433.54 555.00,436.05 561.50,437.57 568.00,438.09 574.50,437.62 581.00,436.15 587.50,433.69 594.00,430.23 600.50,425.77 607.00,420.33 613.50,413.88 620.00,406.44 626.50,398.01 633.00,388.58 639.50,378.15"/><polyline fill="none" stroke="#0000ff" stroke-width="1" shape-rendering="crispEdges" points="639.50,380.29 641.42,382.62 643.33,384.85 645.25,387.01 647.17,389.07 649.08,391.05 651.00,392.94 652.92,394.75 654.83,396.47 656.75,398.10 658.67,399.64 660.58,401.10 662.50,402.48 664.42,403.76 666.33,404.96 668.25,406.08 670.17,407.10 672.08,408.04 674.00,408.90 675.92,409.66 677.83,410.34 679.75,410.94 681.67,411.44 683.58,411.87 685.50,412.20"/><rect x="182" y="393" width="1" height="18" fill="#0000ff"/><rect x="310" y="361" width="1" height="50" fill="#0000ff"/><rect x="483" y="353" width="1" height="58" fill="#0000ff"/><rect x="639" y="378" width="1" height="33" fill="#0000ff"/><rect x="236" y="411" width="1" height="16" fill="#0000ff"/><rect x="395" y="411" width="1" height="35" fill="#0000ff"/><rect x="568" y="411" width="1" height="27" fill="#0000ff"/><path d="M181,413h1v1h-1zM181,414h1v1h-1zM181,415h1v1h-1zM181,416h1v1h-1zM181,417h1v1h-1zM181,418h1v1h-1zM181,419h1v1h-1zM181,420h1v1h-1zM181,421h1v1h-1zM181,422h1v1h-1zM181,423h1v1h-1zM181,424h1v1h-1zM181,425h1v1h-1zM181,426h1v1h-1zM181,427h1v1h-1zM181,428h1v1h-1zM181,429h1v1h-1zM181,430h1v1h-1zM181,431h1v1h-1zM181,432h1v1h-1z" fill="#0000ff"/><path d="M182,433h1v1h-1zM182,434h1v1h-1zM182,435h1v1h-1zM182,436h1v1h-1zM182,437h1v1h-1z" fill="#0000ff"/><path d="M308,413h1v1h-1zM308,414h1v1h-1zM308,415h1v1h-1zM308,416h1v1h-1zM308,417h1v1h-1zM308,418h1v1h-1zM308,419h1v1h-1zM308,420h1v1h-1zM309,421h1v1h-1zM309,422h1v1h-1zM309,423h1v1h-1zM309,424h1v1h-1zM309,425h1v1h-1zM309,426h1v1h-1zM309,427h1v1h-1zM309,428h1v1h-1zM309,429h1v1h-1zM309,430h1v1h-1zM309,431h1v1h-1zM309,432h1v1h-1zM309,433h1v1h-1zM309,434h1v1h-1zM310,435h1v1h-1zM310,436h1v1h-1zM310,437h1v1h-1zM310,438h1v1h-1zM310,439h1v1h-1zM310,440h1v1h-1zM310,441h1v1h-1zM310,442h1v1h-1zM310,443h1v1h-1zM310,444h1v1h-1zM310,445h1v1h-1zM310,446h1v1h-1zM310,447h1v1h-1zM310,448h1v1h-1zM311,449h1v1h-1zM311,450h1v1h-1zM311,451h1v1h-1zM311,452h1v1h-1zM311,453h1v1h-1zM311,454h1v1h-1zM311,455h1v1h-1zM311,456h1v1h-1z" fill="#0000ff"/><path d="M484,413h1v1h-1zM484,414h1v1h-1zM484,415h1v1h-1zM484,416h1v1h-1zM484,417h1v1h-1zM484,418h1v1h-1zM484,419h1v1h-1zM484,420h1v1h-1zM484,421h1v1h-1zM484,422h1v1h-1zM484,423h1v1h-1zM484,424h1v1h-1zM484,425h1v1h-1zM484,426h1v1h-1zM484,427h1v1h-1zM484,428h1v1h-1zM484,429h1v1h-1zM484,430h1v1h-1zM484,431h1v1h-1zM484,432h1v1h-1zM484,433h1v1h-1z" fill="#0000ff"/><path d="M483,434h1v1h-1zM483,435h1v1h-1zM483,436h1v1h-1zM483,437h1v1h-1zM483,438h1v1h-1zM483,439h1v1h-1zM483,440h1v1h-1zM483,441h1v1h-1zM483,442h1v1h-1zM483,443h1v1h-1zM483,444h1v1h-1zM483,445h1v1h-1zM483,446h1v1h-1zM483,447h1v1h-1zM483,448h1v1h-1zM483,449h1v1h-1zM483,450h1v1h-1zM483,451h1v1h-1zM483,452h1v1h-1zM483,453h1v1h-1zM483,454h1v1h-1zM483,455h1v1h-1zM483,456h1v1h-1z" fill="#0000ff"/><path d="M641,412h1v1h-1zM641,413h1v1h-1zM641,414h1v1h-1zM641,415h1v1h-1zM641,416h1v1h-1zM640,417h1v1h-1zM640,418h1v1h-1zM640,419h1v1h-1zM640,420h1v1h-1zM640,421h1v1h-1zM640,422h1v1h-1zM640,423h1v1h-1zM640,424h1v1h-1zM639,425h1v1h-1zM639,426h1v1h-1zM639,427h1v1h-1zM639,428h1v1h-1zM639,429h1v1h-1zM639,430h1v1h-1zM639,431h1v1h-1zM639,432h1v1h-1zM639,433h1v1h-1zM638,434h1v1h-1zM638,435h1v1h-1zM638,436h1v1h-1zM638,437h1v1h-1zM638,438h1v1h-1z" fill="#0000ff"/><path d="M134,414h1v1h-1zM134,415h1v1h-1zM133,416h1v1h-1zM133,417h1v1h-1zM132,418h1v1h-1zM132,419h1v1h-1zM131,420h1v1h-1zM131,421h1v1h-1zM130,422h1v1h-1zM130,423h1v1h-1zM129,424h1v1h-1zM129,425h1v1h-1z" fill="#0b6a0b"/><path d="M138,414h1v1h-1zM138,415h1v1h-1zM139,416h1v1h-1zM139,417h1v1h-1zM140,418h1v1h-1zM140,419h1v1h-1zM141,420h1v1h-1zM141,421h1v1h-1zM142,422h1v1h-1zM142,423h1v1h-1zM143,424h1v1h-1zM143,425h1v1h-1z" fill="#0b6a0b"/><rect x="124" y="425" width="24" height="1" fill="#0b6a0b"/><rect x="124" y="430" width="24" height="1" fill="#0b6a0b"/><path d="M683,414h1v1h-1zM683,415h1v1h-1zM682,416h1v1h-1zM682,417h1v1h-1zM681,418h1v1h-1zM681,419h1v1h-1zM680,420h1v1h-1zM680,421h1v1h-1zM679,422h1v1h-1zM679,423h1v1h-1zM678,424h1v1h-1zM678,425h1v1h-1z" fill="#0b6a0b"/><path d="M687,414h1v1h-1zM687,415h1v1h-1zM688,416h1v1h-1zM688,417h1v1h-1zM689,418h1v1h-1zM689,419h1v1h-1zM690,420h1v1h-1zM690,421h1v1h-1zM691,422h1v1h-1zM691,423h1v1h-1zM692,424h1v1h-1zM692,425h1v1h-1z" fill="#0b6a0b"/><rect x="673" y="425" width="24" height="1" fill="#0b6a0b"/><rect x="673" y="430" width="24" height="1" fill="#0b6a0b"/><rect x="170" y="439" width="24" height="1" fill="#0b6a0b"/><path d="M171,443h1v1h-1zM172,442h1v1h-1zM173,441h1v1h-1zM174,440h1v1h-1z" fill="#0b6a0b"/><path d="M174,440h1v1h-1z" fill="#0b6a0b"/><path d="M176,443h1v1h-1zM177,442h1v1h-1zM178,441h1v1h-1zM179,440h1v1h-1z" fill="#0b6a0b"/><path d="M179,440h1v1h-1z" fill="#0b6a0b"/><path d="M180,443h1v1h-1zM181,442h1v1h-1zM182,441h1v1h-1zM183,440h1v1h-1z" fill="#0b6a0b"/><path d="M183,440h1v1h-1z" fill="#0b6a0b"/><path d="M185,443h1v1h-1zM186,442h1v1h-1zM187,441h1v1h-1zM188,440h1v1h-1z" fill="#0b6a0b"/><path d="M188,440h1v1h-1z" fill="#0b6a0b"/><path d="M190,443h1v1h-1zM191,442h1v1h-1zM192,441h1v1h-1zM193,440h1v1h-1z" fill="#0b6a0b"/><path d="M193,440h1v1h-1z" fill="#0b6a0b"/><rect x="298" y="457" width="24" height="1" fill="#0b6a0b"/><path d="M299,461h1v1h-1zM300,460h1v1h-1zM301,459h1v1h-1zM302,458h1v1h-1z" fill="#0b6a0b"/><path d="M302,458h1v1h-1z" fill="#0b6a0b"/><path d="M304,461h1v1h-1zM305,460h1v1h-1zM306,459h1v1h-1zM307,458h1v1h-1z" fill="#0b6a0b"/><path d="M307,458h1v1h-1z" fill="#0b6a0b"/><path d="M308,461h1v1h-1zM309,460h1v1h-1zM310,459h1v1h-1zM311,458h1v1h-1z" fill="#0b6a0b"/><path d="M311,458h1v1h-1z" fill="#0b6a0b"/><path d="M313,461h1v1h-1zM314,460h1v1h-1zM315,459h1v1h-1zM316,458h1v1h-1z" fill="#0b6a0b"/><path d="M316,458h1v1h-1z" fill="#0b6a0b"/><path d="M318,461h1v1h-1zM319,460h1v1h-1zM320,459h1v1h-1zM321,458h1v1h-1z" fill="#0b6a0b"/><path d="M321,458h1v1h-1z" fill="#0b6a0b"/><rect x="472" y="457" width="24" height="1" fill="#0b6a0b"/><path d="M473,461h1v1h-1zM474,460h1v1h-1zM475,459h1v1h-1zM476,458h1v1h-1z" fill="#0b6a0b"/><path d="M476,458h1v1h-1z" fill="#0b6a0b"/><path d="M478,461h1v1h-1zM479,460h1v1h-1zM480,459h1v1h-1zM481,458h1v1h-1z" fill="#0b6a0b"/><path d="M481,458h1v1h-1z" fill="#0b6a0b"/><path d="M482,461h1v1h-1zM483,460h1v1h-1zM484,459h1v1h-1zM485,458h1v1h-1z" fill="#0b6a0b"/><path d="M485,458h1v1h-1z" fill="#0b6a0b"/><path d="M487,461h1v1h-1zM488,460h1v1h-1zM489,459h1v1h-1zM490,458h1v1h-1z" fill="#0b6a0b"/><path d="M490,458h1v1h-1z" fill="#0b6a0b"/><path d="M492,461h1v1h-1zM493,460h1v1h-1zM494,459h1v1h-1zM495,458h1v1h-1z" fill="#0b6a0b"/><path d="M495,458h1v1h-1z" fill="#0b6a0b"/><rect x="627" y="439" width="24" height="1" fill="#0b6a0b"/><path d="M628,443h1v1h-1zM629,442h1v1h-1zM630,441h1v1h-1zM631,440h1v1h-1z" fill="#0b6a0b"/><path d="M631,440h1v1h-1z" fill="#0b6a0b"/><path d="M633,443h1v1h-1zM634,442h1v1h-1zM635,441h1v1h-1zM636,440h1v1h-1z" fill="#0b6a0b"/><path d="M636,440h1v1h-1z" fill="#0b6a0b"/><path d="M637,443h1v1h-1zM638,442h1v1h-1zM639,441h1v1h-1zM640,440h1v1h-1z" fill="#0b6a0b"/><path d="M640,440h1v1h-1z" fill="#0b6a0b"/><path d="M642,443h1v1h-1zM643,442h1v1h-1zM644,441h1v1h-1zM645,440h1v1h-1z" fill="#0b6a0b"/><path d="M645,440h1v1h-1z" fill="#0b6a0b"/><path d="M647,443h1v1h-1zM648,442h1v1h-1zM649,441h1v1h-1zM650,440h1v1h-1z" fill="#0b6a0b"/><path d="M650,440h1v1h-1z" fill="#0b6a0b"/><rect x="180" y="410" width="4" height="4" fill="#6e6a00"/><rect x="308" y="410" width="4" height="4" fill="#6e6a00"/><rect x="482" y="410" width="4" height="4" fill="#6e6a00"/><rect x="637" y="410" width="4" height="4" fill="#6e6a00"/><path d="M181,437h2v1h-2zM180,438h4v1h-4zM179,439h6v1h-6zM179,440h6v1h-6zM180,441h4v1h-4zM181,442h2v1h-2z" fill="#6e6a00"/><path d="M309,455h2v1h-2zM308,456h4v1h-4zM307,457h6v1h-6zM307,458h6v1h-6zM308,459h4v1h-4zM309,460h2v1h-2z" fill="#6e6a00"/><path d="M483,455h2v1h-2zM482,456h4v1h-4zM481,457h6v1h-6zM481,458h6v1h-6zM482,459h4v1h-4zM483,460h2v1h-2z" fill="#6e6a00"/><path d="M638,437h2v1h-2zM637,438h4v1h-4zM636,439h6v1h-6zM636,440h6v1h-6zM637,441h4v1h-4zM638,442h2v1h-2z" fill="#6e6a00"/><path d="M135,409h2v1h-2zM134,410h4v1h-4zM133,411h6v1h-6zM133,412h6v1h-6zM134,413h4v1h-4zM135,414h2v1h-2z" fill="#6e6a00"/><path d="M684,409h2v1h-2zM683,410h4v1h-4zM682,411h6v1h-6zM682,412h6v1h-6zM683,413h4v1h-4zM684,414h2v1h-2z" fill="#6e6a00"/><text transform="translate(155.5,390) scale(1,0.9)" fill="#ff0000" font-size="10" letter-spacing="0.55" stroke="#ff0000" stroke-width="0.12">2901</text><text transform="translate(182.5,389) scale(1,0.9)" fill="#ff0000" font-size="10" letter-spacing="0.55" stroke="#ff0000" stroke-width="0.12">3120</text><text transform="translate(283.5,358) scale(1,0.9)" fill="#ff0000" font-size="10" letter-spacing="0.55" stroke="#ff0000" stroke-width="0.12">8028</text><text transform="translate(310.5,356) scale(1,0.9)" fill="#ff0000" font-size="10" letter-spacing="0.55" stroke="#ff0000" stroke-width="0.12">8308</text><text transform="translate(457.5,348) scale(1,0.9)" fill="#ff0000" font-size="10" letter-spacing="0.55" stroke="#ff0000" stroke-width="0.12">9620</text><text transform="translate(484.5,349) scale(1,0.9)" fill="#ff0000" font-size="10" letter-spacing="0.55" stroke="#ff0000" stroke-width="0.12">9502</text><text transform="translate(612.5,374) scale(1,0.9)" fill="#ff0000" font-size="10" letter-spacing="0.55" stroke="#ff0000" stroke-width="0.12">5527</text><text transform="translate(639.5,376) scale(1,0.9)" fill="#ff0000" font-size="10" letter-spacing="0.55" stroke="#ff0000" stroke-width="0.12">5180</text><text transform="translate(223.5,439) scale(1,0.9)" fill="#ff0000" font-size="10" letter-spacing="0.55" stroke="#ff0000" stroke-width="0.12">2458</text><text transform="translate(382.5,458) scale(1,0.9)" fill="#ff0000" font-size="10" letter-spacing="0.55" stroke="#ff0000" stroke-width="0.12">5483</text><text transform="translate(556.5,449) scale(1,0.9)" fill="#ff0000" font-size="10" letter-spacing="0.55" stroke="#ff0000" stroke-width="0.12">4131</text><text transform="translate(175.5,433) rotate(-90) scale(1,0.9)" fill="#ff0000" font-size="10" letter-spacing="0.55" stroke="#ff0000" stroke-width="0.12">219</text><text transform="translate(192.5,438) rotate(-90) scale(1,0.9)" fill="#ff0000" font-size="10" letter-spacing="0.55" stroke="#ff0000" stroke-width="0.12">125</text><text transform="translate(303.5,433) rotate(-90) scale(1,0.9)" fill="#ff0000" font-size="10" letter-spacing="0.55" stroke="#ff0000" stroke-width="0.12">280</text><text transform="translate(320.5,457) rotate(-90) scale(1,0.9)" fill="#ff0000" font-size="10" letter-spacing="0.55" stroke="#ff0000" stroke-width="0.12">146</text><text transform="translate(494.5,432) rotate(-90) scale(1,0.9)" fill="#ff0000" font-size="10" letter-spacing="0.55" stroke="#ff0000" stroke-width="0.12">118</text><text transform="translate(478.5,458) rotate(-90) scale(1,0.9)" fill="#ff0000" font-size="10" letter-spacing="0.55" stroke="#ff0000" stroke-width="0.12">52</text><text transform="translate(633.5,437) rotate(-90) scale(1,0.9)" fill="#ff0000" font-size="10" letter-spacing="0.55" stroke="#ff0000" stroke-width="0.12">150</text><text transform="translate(651.5,433) rotate(-90) scale(1,0.9)" fill="#ff0000" font-size="10" letter-spacing="0.55" stroke="#ff0000" stroke-width="0.12">348</text><text transform="translate(136.5,424) scale(1,0.9)" fill="#ff0000" font-size="10" letter-spacing="0.55" stroke="#ff0000" stroke-width="0.12">76</text>
</svg>
</body></html>
